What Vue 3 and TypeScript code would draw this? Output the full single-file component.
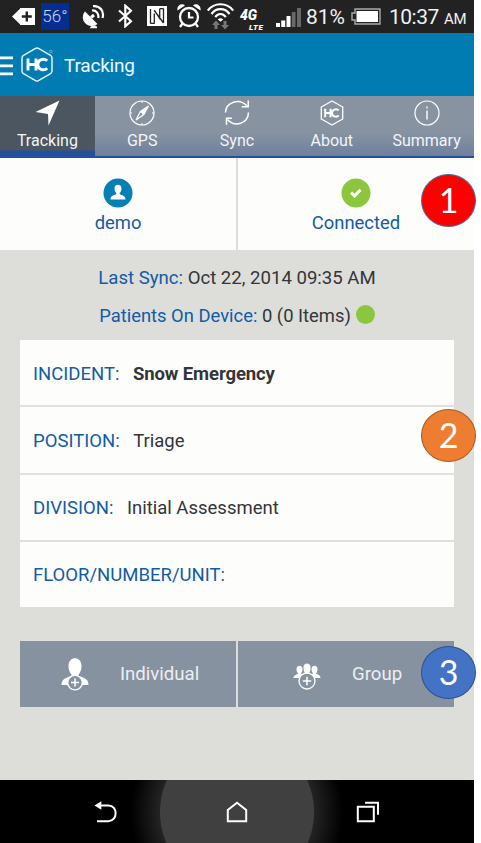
<script setup lang="ts">
interface Tab {
  id: string
  label: string
}

interface Field {
  label: string
  value: string
  strong?: boolean
}

const tabs: Tab[] = [
  { id: 'tracking', label: 'Tracking' },
  { id: 'gps', label: 'GPS' },
  { id: 'sync', label: 'Sync' },
  { id: 'about', label: 'About' },
  { id: 'summary', label: 'Summary' },
]

const fields: Field[] = [
  { label: 'INCIDENT:', value: 'Snow Emergency', strong: true },
  { label: 'POSITION:', value: 'Triage' },
  { label: 'DIVISION:', value: 'Initial Assessment' },
  { label: 'FLOOR/NUMBER/UNIT:', value: '' },
]

const activeTab = 'tracking'
</script>

<template>
  <div class="page">
    <div class="phone">
      <div class="status">
        <svg class="s-back" width="23" height="17" viewBox="0 0 23 17">
          <path d="M0 8.5 8 0.8V0h15v17H8v-.8z" fill="#fff" />
          <path d="M14.8 3.5v10M9.8 8.5h10" stroke="#222" stroke-width="2.4" />
        </svg>
        <span class="temp">56°</span>
        <svg class="s-sat" width="23" height="24" viewBox="0 0 23 24">
          <path d="M3 6.500 15.500 19c-3.800 3-9.500 2.500-12.500-1S.2 9.500 3 6.500z" fill="#fff" />
          <path d="M8 23c1-3 6-3 7-1v1.200H7z" fill="#fff" />
          <path d="M9 12.500 12 10" stroke="#fff" stroke-width="3" />
          <path d="M10 5.500c4-.5 7 3 6.300 7.500M11 1.200c7-.8 11.500 5 9.500 11.800" fill="none" stroke="#fff" stroke-width="2.200" />
        </svg>
        <svg class="s-bt" width="15" height="24" viewBox="0 0 15 24">
          <path d="M1 6.500 13 17.300 7.300 22.300V1.700L13 6.700 1 17.500" fill="none" stroke="#fff" stroke-width="2.200" />
        </svg>
        <svg class="s-nfc" width="20" height="20" viewBox="0 0 20 20">
          <path d="M0 0h20v20H0z" fill="#fff" />
          <path d="M3.500 17.500V3M3.500 17.300h4M7.300 17.500V7.500M7.300 4l6 9.500M12.700 13V2.700M12.700 2.700h3.800M16.500 2.500V17M16.500 17 7.300 4.500" fill="none" stroke="#222" stroke-width="1.300" />
        </svg>
        <svg class="s-alarm" width="24" height="24" viewBox="0 0 24 24">
          <circle cx="12" cy="13" r="9" fill="none" stroke="#fff" stroke-width="2.300" />
          <path d="M12 8v5.500h4.500M5.500 19.500 3 23M18.500 19.500 21 23" fill="none" stroke="#fff" stroke-width="2.200" />
          <path d="M.5 6.500C-.5 1.500 5-1.500 8 1.500zM23.500 6.500C24.500 1.500 19-1.500 16 1.500z" fill="#fff" />
        </svg>
        <svg class="s-wifi" width="27" height="27" viewBox="0 0 27 27">
          <g fill="none" stroke="#fff" stroke-width="2.200">
            <path d="M.8 7.500C7-.8 20-.8 26.200 7.500M4.500 11C9 4.500 18 4.500 22.500 11M8.200 14c3-4 7.600-4 10.600 0" />
          </g>
          <path d="M10.800 16.500c1.600-1.600 3.800-1.600 5.400 0l-2.700 2.200z" fill="#fff" />
          <path d="m9 17.500 4 4.500h-2.500v4h-3v-4H5zM18 26.500l-4-4.500h2.500v-4h3v4H22z" fill="#777" />
        </svg>
        <span class="net"><b>4G</b><i>LTE</i></span>
        <svg class="s-signal" width="25" height="20" viewBox="0 0 25 20">
          <path d="M0 15h4v4H0zM5.200 12.500h4V19h-4zM10.500 8h4v11h-4z" fill="#fff" />
          <path d="M15.800 4h3.700v15h-3.700zM21 0h4v19h-4z" fill="#686868" />
        </svg>
        <span class="pct">81%</span>
        <svg class="s-batt" width="30" height="17" viewBox="0 0 30 17">
          <path d="M4 1h25v15H4v-4H1V5h3z" fill="none" stroke="#aaa" stroke-width="1.400" />
          <path d="M5.500 3H27v11H5.500z" fill="#fff" />
        </svg>
        <span class="clock">10:37</span>
        <span class="ampm">AM</span>
      </div>

      <header class="header">
        <svg class="burger" width="13" height="20" viewBox="0 0 13 20">
          <path d="M0 1.800h13M0 9.800h13M0 17.800h13" stroke="#fff" stroke-width="2.700" />
        </svg>
        <svg class="logo" width="32" height="35" viewBox="0 0 32 35">
          <path d="M14.500 1.400q1.500-.9 3 0L29.500 8.300q1.500.9 1.500 2.600v13.200q0 1.700-1.500 2.600l-12 6.900q-1.500.9-3 0l-12-6.900Q1 25.800 1 24.100V10.900q0-1.700 1.500-2.600z" fill="none" stroke="#e5f1f8" stroke-width="1.500" />
          <path d="M7 11.500v12M15 11.500v12M7 17.500h8M26.200 13.800c-3.500-3.200-9.400-1-9.400 3.700s5.900 6.900 9.400 3.700" fill="none" stroke="#fff" stroke-width="2.900" />
          <circle cx="29.700" cy="4.500" r="1.300" fill="none" stroke="#80bfdc" stroke-width=".8" />
        </svg>
        <h1 class="title">Tracking</h1>
      </header>

      <nav class="tabs">
        <div v-for="tab in tabs" :key="tab.id" class="tab" :class="{ active: tab.id === activeTab }">
          <svg class="tab-icon" width="28" height="28" viewBox="0 0 28 28">
            <path v-if="tab.id === 'tracking'" d="M26.500 1.500 15.500 26.500 15 15 2.500 13z" fill="#fff" />
            <g v-else-if="tab.id === 'gps'" fill="none" stroke="#fff">
              <circle cx="14" cy="14" r="12" stroke-width="1.200" />
              <path d="M20.500 7 15.800 15.500 8 21l4.500-8.700zM12.500 12.300l3.300 3.200" stroke-width="1.200" />
              <path d="M20.500 7 15.800 15.500l-3.300-3.200z" fill="#fff" stroke="none" />
              <path d="M14 2v2M14 24v2M2 14h2M24 14h2" />
            </g>
            <g v-else-if="tab.id === 'sync'" fill="none" stroke="#fff" stroke-width="1.500">
              <path d="M2.500 13.500C3 3.500 16-1.500 24 7M25.500 13.500C25 24.500 12 29 4.500 20.500" />
              <path d="M25.200 1.500v6.300h-6.500M9 19.300H3.500v6.500" />
            </g>
            <g v-else-if="tab.id === 'about'" fill="none" stroke="#fff">
              <path d="m14 2 10.700 6v12L14 26 3.300 20V8z" stroke-width="1.300" stroke-linejoin="round" />
              <path d="M7.200 9.800v8.400M12.500 9.800v8.400M7.200 14h5.300M20.700 11.500c-2.400-2.300-6.700-.9-6.700 2.500s4.300 4.800 6.700 2.500" stroke-width="2" />
            </g>
            <g v-else fill="none" stroke="#fff">
              <circle cx="14" cy="14" r="12" stroke-width="1.200" />
              <path d="M14 11.500v9M14 7.500v2" stroke-width="1.400" />
            </g>
          </svg>
          <span class="tab-label">{{ tab.label }}</span>
        </div>
      </nav>

      <section class="account">
        <div class="cell">
          <svg width="30" height="30" viewBox="0 0 30 30">
            <circle cx="15" cy="15" r="14.500" fill="#0580b5" />
            <path d="M11.500 10.200c0-4.500 7-4.500 7 0 0 2-.7 3.700-1.800 4.900v1.200c2.300 1 5.600 1.200 5.800 5.200h-15c.2-4 3.500-4.200 5.800-5.200v-1.200c-1.100-1.200-1.800-2.900-1.800-4.900z" fill="#fff" />
          </svg>
          <span>demo</span>
        </div>
        <div class="cell">
          <svg width="30" height="30" viewBox="0 0 30 30">
            <circle cx="15" cy="15" r="14.500" fill="#8cc63f" />
            <path d="m10.200 14.700 3.300 3.200 6-6" fill="none" stroke="#fff" stroke-width="3" />
          </svg>
          <span>Connected</span>
        </div>
      </section>

      <main class="body">
        <p class="info sync-line"><span class="key">Last Sync:</span> Oct 22, 2014 09:35 AM</p>
        <p class="info patients"><span class="key">Patients On Device:</span> 0 (0 Items)<span class="dot"></span></p>

        <div class="card">
          <div v-for="field in fields" :key="field.label" class="field">
            <span class="key">{{ field.label }}</span>
            <span class="value" :class="{ strong: field.strong }">{{ field.value }}</span>
          </div>
        </div>

        <div class="actions">
          <button class="action">
            <svg width="28" height="33" viewBox="0 0 28 33">
              <path d="M7.500 8c0-10.500 13-10.500 13 0 0 4-1.300 6.500-3 8.500v1.500c4 1.500 10 2 10 9H.5c0-7 6-7.500 10-9v-1.500c-1.700-2-3-4.500-3-8.500z" fill="#fff" />
              <circle cx="14" cy="24.600" r="7.300" fill="#8792a1" stroke="#fff" stroke-width="1.300" />
              <path d="M14 20.600v8M10 24.600h8" stroke="#fff" stroke-width="1.500" />
            </svg>
            <span class="action-label">Individual</span>
          </button>
          <button class="action">
            <svg width="28" height="33" viewBox="0 0 28 33">
              <g fill="#fff">
                <path d="M3.500 11c0-4.500 6-4.500 6 0 0 2.500-1 3.800-1.600 4.500 1.500 1 4.100 1 4.100 4.500H.5c0-3 3-3 4.600-4.500C4.500 14.800 3.500 13.500 3.500 11z" />
                <path d="M18.500 11c0-4.500 6-4.500 6 0 0 2.500-1 3.800-1.600 4.500 1.500 1 4.600 1.500 4.600 4.500H16c0-3 2.500-3.500 4.100-4.500-.6-.7-1.600-2-1.600-4.500z" />
                <path d="M10.400 9.500c0-5.500 7.200-5.500 7.200 0 0 3-1 5-2 6 2 1.500 5.500 2 5.500 6.500H6.900c0-4.500 3.500-5 5.500-6.500-1-1-2-3-2-6z" />
              </g>
              <circle cx="14" cy="23" r="8" fill="#8792a1" stroke="#fff" stroke-width="1.300" />
              <path d="M14 18.800v8.400M9.800 23h8.400" stroke="#fff" stroke-width="1.500" />
            </svg>
            <span class="action-label">Group</span>
          </button>
        </div>
      </main>

      <footer class="navbar">
        <span class="nav-item">
          <svg width="24" height="22" viewBox="0 0 24 22">
            <path d="M6 4.500h8.500c9.500 0 9.500 15.700 0 15.700H3" fill="none" stroke="#fff" stroke-width="2" />
            <path d="M.5 4.500 7.300.3v8.400z" fill="#fff" />
          </svg>
        </span>
        <span class="nav-item home">
          <svg width="22" height="22" viewBox="0 0 22 22">
            <path d="M1.800 9 11 1.800 20.200 9v11.200H1.800z" fill="none" stroke="#fff" stroke-width="2" />
          </svg>
        </span>
        <span class="nav-item">
          <svg width="24" height="22" viewBox="0 0 24 22">
            <path d="M1.800 5.800h16v14.500h-16z" fill="none" stroke="#fff" stroke-width="2" />
            <path d="M9 1.800h13v12" fill="none" stroke="#fff" stroke-width="2" />
          </svg>
        </span>
      </footer>
    </div>

    <span class="badge one">1</span>
    <span class="badge two">2</span>
    <span class="badge three">3</span>
  </div>
</template>

<style>
body {
  margin: 0;
  background: #fff;
}
</style>

<style scoped>
.page {
  position: relative;
  width: 481px;
  height: 843px;
  overflow: hidden;
  font-family: Roboto, "Liberation Sans", sans-serif;
}

.phone {
  display: flex;
  flex-direction: column;
  width: 474px;
  height: 843px;
  background: #dddeda;
}

.status {
  display: flex;
  flex: none;
  align-items: flex-start;
  box-sizing: border-box;
  height: 33px;
  overflow: hidden;
  background: #222;
  color: #f1f1f1;
  white-space: nowrap;
}

.status > * {
  flex: none;
}

.s-back { margin: 8px 0 0 12px; }

.temp {
  width: 28px;
  height: 27px;
  margin: 3px 0 0 6px;
  background: #062e90;
  color: #c9d5f5;
  font-size: 17px;
  font-weight: 300;
  line-height: 27px;
  text-align: center;
}

.s-sat { margin: 5px 0 0 13px; }
.s-bt { margin: 4px 0 0 13px; }
.s-nfc { margin: 6px 0 0 14px; }
.s-alarm { margin: 4px 0 0 10px; }
.s-wifi { margin: 3px 0 0 6px; }

.net {
  display: flex;
  flex-direction: column;
  width: 27px;
  margin: 8px 0 0 6px;
  color: #fff;
  font-style: italic;
  font-weight: 900;
}

.net b {
  font-size: 14px;
  font-weight: 900;
  line-height: 15px;
}

.net i {
  margin-left: 9px;
  font-size: 8px;
  line-height: 9px;
  letter-spacing: 0.6px;
}

.s-signal { margin: 8px 0 0 9px; }

.pct {
  width: 39px;
  margin: 4px 0 0 5px;
  font-size: 21px;
  line-height: 27px;
}

.s-batt { margin: 8px 0 0 6px; }

.clock {
  width: 50px;
  margin: 4px 0 0 8px;
  font-size: 21px;
  line-height: 27px;
  letter-spacing: -0.5px;
}

.ampm {
  margin: 5px 0 0 5px;
  font-size: 15px;
  line-height: 29px;
  letter-spacing: -0.4px;
}

.header {
  display: flex;
  flex: none;
  align-items: center;
  height: 63px;
  background: #007cb2;
}

.burger { margin-top: 2px; }
.logo { margin-left: 8px; }

.title {
  margin: 2px 0 0 11px;
  color: #f2f8fb;
  font-size: 19px;
  font-weight: 400;
  line-height: 24px;
  letter-spacing: -0.2px;
}

.tabs {
  display: grid;
  flex: none;
  grid-template-columns: repeat(5, 1fr);
  box-sizing: border-box;
  height: 62px;
  border-bottom: 2px solid #2450a0;
  background: linear-gradient(#8793a1 0 60%, #6f809d);
}

.tab {
  display: flex;
  flex-direction: column;
  align-items: center;
  color: #f3f5f7;
}

.tab.active {
  background: linear-gradient(#4b5660 0 54px, #2450a0 55px);
}

.tab-icon {
  margin-top: 3px;
}

.tab-label {
  margin-top: 4px;
  font-size: 16px;
  line-height: 20px;
}

.account {
  display: grid;
  flex: none;
  grid-template-columns: 1fr 1fr;
  gap: 2px;
  height: 92px;
}

.cell {
  display: flex;
  flex-direction: column;
  align-items: center;
  background: #fdfdfc;
  color: #125ba5;
  font-size: 18.4px;
  line-height: 24px;
}

.cell svg {
  margin: 20px 0 3px;
}

.body {
  display: flex;
  flex: 1;
  flex-direction: column;
  padding: 0 20px;
}

.key {
  color: #125ba5;
}

.info {
  margin: 0;
  color: #333539;
  font-size: 18.6px;
  line-height: 24px;
  text-align: center;
}

.sync-line { margin-top: 16px; }

.patients {
  display: flex;
  justify-content: center;
  margin-top: 14px;
  font-size: 18.4px;
  white-space: pre;
}

.dot {
  width: 19px;
  height: 19px;
  margin: 1px 0 0 5px;
  border-radius: 50%;
  background: #8cc63f;
}

.card {
  display: grid;
  grid-template-rows: repeat(4, 1fr);
  gap: 2px;
  height: 267px;
  margin-top: 12px;
  background: #e0e1df;
}

.field {
  display: flex;
  align-items: center;
  gap: 13.5px;
  padding: 2px 0 0 13px;
  background: #fdfdfc;
  color: #333539;
  font-size: 18.5px;
}

.strong {
  font-weight: 700;
  letter-spacing: -0.1px;
}

.actions {
  display: grid;
  grid-template-columns: 1fr 1fr;
  gap: 2px;
  height: 66px;
  margin-top: 34px;
}

.action {
  display: flex;
  align-items: center;
  padding: 0 0 0 41px;
  border: 0;
  background: #8792a1;
  color: #eceef1;
  font: 18.6px/24px Roboto, sans-serif;
}

.action + .action {
  padding-left: 55px;
}

.action-label { margin-left: 31px; }

.navbar {
  display: grid;
  flex: none;
  grid-template-columns: 1fr 154px 1fr;
  height: 63px;
  overflow: hidden;
  background: radial-gradient(circle at 237px 32px, #404040 0 76.5px, #232323 77.5px, #000 106px);
}

.nav-item {
  display: flex;
  align-items: center;
  justify-content: center;
}

.nav-item:first-child { padding-left: 52px; }
.nav-item:last-child { padding-right: 52px; }

.badge {
  position: absolute;
  left: 421px;
  box-sizing: border-box;
  width: 55px;
  height: 53px;
  border: 1.5px solid #41719c;
  border-radius: 50%;
  background: #fe0000;
  color: #fff;
  font: 34px/49px Lato, sans-serif;
  text-align: center;
}

.one { top: 174px; }
.two { top: 409px; border-color: #ae5a21; background: #ed7d31; }
.three { top: 646px; border-color: #2f528f; background: #4472c4; }
</style>
